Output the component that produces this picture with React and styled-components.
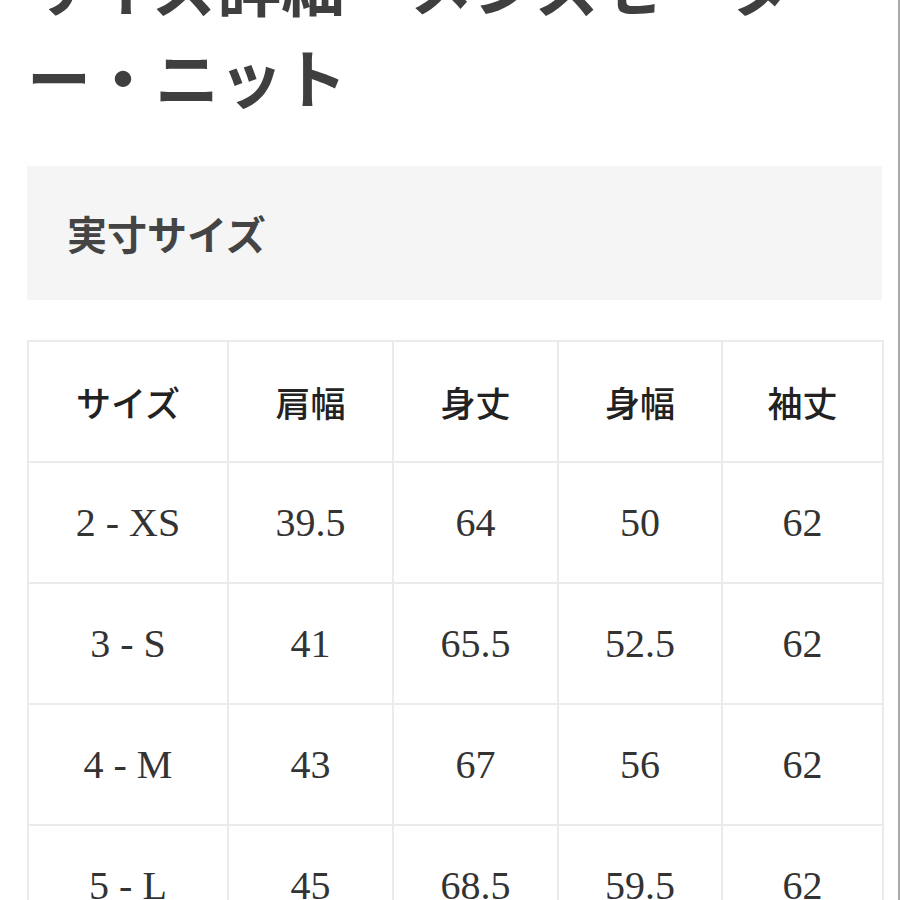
import React from 'react';
import styled, { createGlobalStyle } from 'styled-components';

const Global = createGlobalStyle`
  html, body {
    margin: 0;
    padding: 0;
    background: #fff;
  }
`;

const Page = styled.div`
  box-sizing: border-box;
  width: 900px;
  height: 900px;
  overflow: hidden;
  padding: 0 16px 0 27px;
  border-right: 2px solid #a9a9a9;
`;

const Title = styled.h1`
  margin: -63px 0 45px 0;
  font-family: "Noto Sans CJK JP", "Noto Sans", sans-serif;
  font-weight: 700;
  font-size: 64px;
  line-height: 92px;
  color: #3f3f3f;
`;

const SectionHead = styled.div`
  box-sizing: border-box;
  height: 134px;
  display: flex;
  align-items: center;
  padding-left: 40px;
  background: #f5f5f5;
  font-family: "Noto Sans CJK JP", "Noto Sans", sans-serif;
  font-weight: 700;
  font-size: 40px;
  color: #444;
  margin-bottom: 40px;
`;

const Table = styled.table`
  width: 855px;
  border-collapse: collapse;
  table-layout: fixed;
  border: 2px solid #efefef;
`;

const Cell = styled.td`
  height: 119px;
  padding: 0;
  border: 2px solid #ebebeb;
  text-align: center;
  vertical-align: middle;
  color: ${p => (p.$head ? '#222' : '#333')};
  font-family: "Liberation Serif", "Noto Sans CJK JP", serif;
  font-size: ${p => (p.$head ? '35px' : '40px')};
  font-weight: ${p => (p.$head ? 500 : 400)};
`;

const widths = [200, 165, 165, 164, 161];
const head = ['サイズ', '肩幅', '身丈', '身幅', '袖丈'];
const rows = [
  ['2 - XS', '39.5', '64', '50', '62'],
  ['3 - S', '41', '65.5', '52.5', '62'],
  ['4 - M', '43', '67', '56', '62'],
  ['5 - L', '45', '68.5', '59.5', '62'],
];

export default function App() {
  return (
    <Page>
      <Global />
      <Title>
        サイズ詳細　メンズセータ
        <br />
        ー・ニット
      </Title>
      <SectionHead>実寸サイズ</SectionHead>
      <Table>
        <colgroup>
          {widths.map((w, i) => (
            <col key={i} style={{ width: w }} />
          ))}
        </colgroup>
        <tbody>
          <tr>
            {head.map(h => (
              <Cell as="th" $head key={h}>{h}</Cell>
            ))}
          </tr>
          {rows.map(r => (
            <tr key={r[0]}>
              {r.map((v, i) => (
                <Cell key={i}>{v}</Cell>
              ))}
            </tr>
          ))}
        </tbody>
      </Table>
    </Page>
  );
}
